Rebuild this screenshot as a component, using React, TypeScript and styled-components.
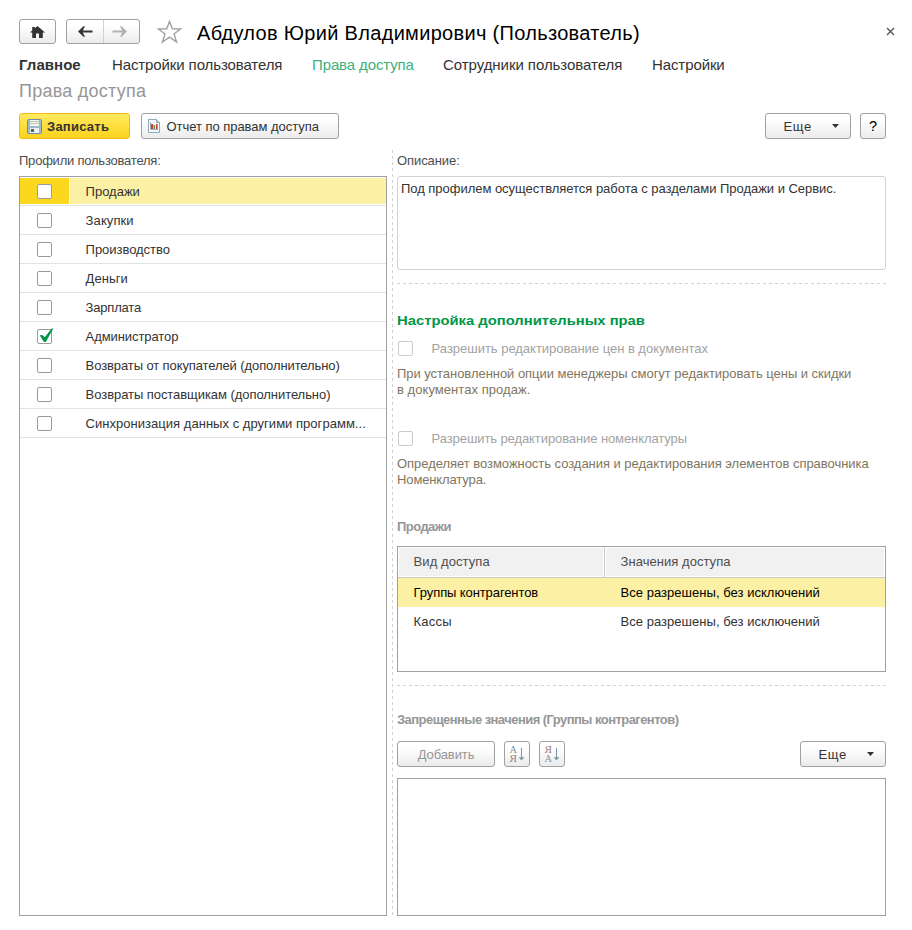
import React from 'react';
import styled, { createGlobalStyle, css } from 'styled-components';

const Global = createGlobalStyle`
  *, *::before, *::after { box-sizing: border-box; }
  body { margin: 0; background: #fff; }
`;

const Page = styled.main`
  display: flex;
  flex-direction: column;
  width: 912px;
  height: 930px;
  padding: 19px 26px 14px 19px;
  background: #fff;
  color: #333;
  font: 13px/16px "Liberation Sans", Arial, sans-serif;
  white-space: nowrap;
`;

const Label = styled.span<{ $track?: number }>`
  letter-spacing: ${(p) => p.$track ?? 0}px;
`;

/* ---------- title line ---------- */

const TitleBar = styled.header`
  display: flex;
  height: 25px;
`;

const raised = css`
  border: 1px solid #a0a0a0;
  border-radius: 3px;
  background: linear-gradient(#fff 0%, #fff 25%, #ebebeb 100%);
`;

const HomeButton = styled.button`
  ${raised}
  display: flex;
  align-items: center;
  justify-content: center;
  width: 37px;
  padding: 0;
`;

const HistoryGroup = styled.div`
  ${raised}
  display: grid;
  grid-template-columns: 36px 1fr;
  width: 74px;
  margin-left: 10px;
`;

const HistoryButton = styled.button`
  display: flex;
  align-items: center;
  justify-content: center;
  padding: 0;
  border: 0;
  background: none;
  & + & { padding-right: 4px; border-left: 1px solid #d2d2d2; }
`;

const StarIcon = styled.svg`
  margin: 0 0 0 17px;
`;

const Title = styled.h1`
  margin: 2px 0 0 14px;
  color: #000;
  font-size: 20px;
  font-weight: 400;
  line-height: 24px;
  letter-spacing: 0.31px;
`;

const CloseButton = styled.button`
  display: flex;
  align-self: flex-start;
  margin: 8px -9px 0 auto;
  padding: 0;
  border: 0;
  background: none;
`;

/* ---------- navigation ---------- */

const Nav = styled.nav`
  display: grid;
  grid-template-columns: 93px 200px 131px 209px auto;
  height: 18px;
  margin-top: 12px;
  font-size: 15px;
  line-height: 18px;
`;

const NavLink = styled.a<{ $current?: boolean; $strong?: boolean; $track: number }>`
  color: ${(p) => (p.$current ? '#41b07c' : '#333')};
  font-weight: ${(p) => (p.$strong ? 700 : 400)};
  letter-spacing: ${(p) => p.$track}px;
`;

const Subtitle = styled.h2`
  margin: 6px 0 0;
  color: #969696;
  font-size: 18px;
  font-weight: 400;
  line-height: 22px;
  letter-spacing: 0.25px;
`;

/* ---------- buttons ---------- */

const Toolbar = styled.div<{ $gap: number; $top: number }>`
  display: flex;
  gap: ${(p) => p.$gap}px;
  height: 26px;
  margin-top: ${(p) => p.$top}px;
`;

const Spacer = styled.div`
  flex: 1;
`;

const Button = styled.button<{ $width: number; $tone?: 'primary' | 'disabled'; $start?: number }>`
  ${raised}
  display: flex;
  align-items: center;
  width: ${(p) => p.$width}px;
  height: 26px;
  padding: 0 0 0 ${(p) => p.$start ?? 0}px;
  justify-content: ${(p) => (p.$start === undefined ? 'center' : 'flex-start')};
  color: #333;
  font: inherit;
  ${(p) =>
    p.$tone === 'primary' &&
    css`
      border-color: #f2bb17;
      background: linear-gradient(#ffea60 0%, #fbd21c 100%);
      font-weight: 700;
    `}
  ${(p) => p.$tone === 'disabled' && css`color: #969696;`}
  & > ${Label} { padding-top: 2px; }
`;

const ButtonIcon = styled.svg<{ $after: number }>`
  flex: none;
  margin-right: ${(p) => p.$after}px;
`;

const Caret = styled.svg`
  margin-left: 20px;
`;

const SortGlyph = styled.svg`
  flex: none;
  overflow: visible;
  font-family: "Liberation Serif", serif;
  font-size: 9.5px;
`;

const HelpMark = styled.span`
  color: #000;
  font-size: 14.5px;
  font-weight: 400;
`;

/* ---------- two panes ---------- */

const Panes = styled.div`
  display: grid;
  grid-template-columns: 368px 10px 489px;
  flex: 1;
  margin-top: 11px;
`;

const Pane = styled.section`
  display: flex;
  flex-direction: column;
  min-width: 0;
`;

const Splitter = styled.div`
  width: 1px;
  margin-left: 5px;
  background: repeating-linear-gradient(#d2d2d2 0 3px, transparent 3px 6px);
`;

const Rule = styled.hr<{ $top: number }>`
  flex: none;
  width: 100%;
  height: 1px;
  margin: ${(p) => p.$top}px 0 0;
  border: 0;
  background: repeating-linear-gradient(90deg, #d2d2d2 0 3px, transparent 3px 6px);
`;

const Caption = styled.div`
  height: 23px;
  margin-top: 3px;
  color: #4d4d4d;
`;

const ProfileList = styled.ul`
  flex: 1;
  margin: 0;
  padding: 0;
  border: 1px solid #a0a0a0;
  list-style: none;
`;

const ProfileRow = styled.li<{ $selected?: boolean }>`
  display: grid;
  grid-template-columns: 49px 1fr;
  column-gap: 1px;
  height: 29px;
  padding: 1px 0;
  border-bottom: 1px solid #e2e2e2;
  --mark: ${(p) => (p.$selected ? '#fbd81f' : 'transparent')};
  --fill: ${(p) => (p.$selected ? '#fcf0a4' : 'transparent')};
`;

const MarkCell = styled.div`
  display: flex;
  align-items: center;
  padding-left: 17px;
  background: var(--mark);
`;

const NameCell = styled.div`
  display: flex;
  align-items: center;
  padding: 2px 0 0 15.6px;
  background: var(--fill);
`;

const Box = styled.span<{ $faint?: boolean }>`
  flex: none;
  width: 15px;
  height: 15px;
  border: 1px solid ${(p) => (p.$faint ? '#cbcbcb' : '#9b9b9b')};
  border-radius: 2px;
  background: #fff;
`;

const Tick = styled.svg`
  display: block;
  margin: -2px 0 0 1px;
  overflow: visible;
`;

const Description = styled.div`
  flex: none;
  height: 94px;
  padding: 4px 3px;
  border: 1px solid #d2d2d2;
  border-radius: 3px;
`;

const GreenHeading = styled.h3`
  align-self: flex-start;
  margin: 29px 0 0;
  color: #009646;
  font-size: 13px;
  line-height: 16px;
  transform: scaleX(1.138);
  transform-origin: left;
`;

const Option = styled.label<{ $top: number }>`
  display: flex;
  align-items: center;
  gap: 18.6px;
  height: 16px;
  margin-top: ${(p) => p.$top}px;
  padding-left: 1px;
  color: #a3a3a3;
  ${Box} { margin-top: -1px; }
`;

const Hint = styled.p`
  display: flex;
  flex-direction: column;
  height: 32px;
  margin: 9px 0 0;
  color: #7f7661;
`;

const GreyHeading = styled.h4<{ $top: number }>`
  margin: ${(p) => p.$top}px 0 0;
  color: #969696;
  font-size: 13px;
  line-height: 16px;
  letter-spacing: -0.55px;
`;

const AccessTable = styled.div`
  flex: none;
  height: 126px;
  margin-top: 11px;
  border: 1px solid #a0a0a0;
`;

const columns = css`
  display: grid;
  grid-template-columns: 206px 1fr;
`;

const TableHead = styled.div`
  ${columns}
  height: 31px;
  border-bottom: 1px solid #c8c8c8;
`;

const HeadCell = styled.div`
  display: flex;
  align-items: center;
  padding-left: 14.6px;
  border: 1px solid #fff;
  background: #f1f1f1;
  color: #4d4d4d;
  & + & { box-shadow: -1px 0 #c8c8c8; margin-left: 1px; }
`;

const TableRow = styled.div<{ $selected?: boolean }>`
  ${columns}
  align-items: center;
  height: 29px;
  background: ${(p) => (p.$selected ? '#fcf0a4' : 'none')};
  color: ${(p) => (p.$selected ? '#000' : '#333')};
`;

const Cell = styled.div`
  padding-left: 15.6px;
  & + & { padding-left: 16.6px; }
`;

const DeniedList = styled.div`
  flex: 1;
  margin-top: 11px;
  border: 1px solid #a0a0a0;
`;

/* ---------- icons ---------- */

const HomeIcon = () => (
  <svg width="15" height="12" viewBox="0 0 15 12" fill="#333">
    <path d="M7.5 0 15 6.6H12.8V12H9V7.6H6V12H2.2V6.6H0L2.2 4.6V1H4.8V2.3Z" />
  </svg>
);

const ArrowIcon = ({ back }: { back?: boolean }) => (
  <svg width="15" height="11" viewBox="0 0 15 11" fill={back ? '#333' : '#b0b0b0'}>
    {back ? (
      <path d="M0 5.5 5.5 0.3H7L4.8 4.4H14.5V6.6H4.8L7 10.7H5.5Z" />
    ) : (
      <path d="M15 5.5 9.5 0.3H8L10.2 4.4H0.5V6.6H10.2L8 10.7H9.5Z" />
    )}
  </svg>
);

const CaretIcon = () => (
  <Caret width="7" height="4" viewBox="0 0 7 4" fill="#333">
    <path d="M0 0H7L3.5 4Z" />
  </Caret>
);

const DiskIcon = () => (
  <ButtonIcon $after={5} width="15" height="15" viewBox="0 0 15 15">
    <rect x=".5" y=".5" width="14" height="14" rx="1" fill="#9db9cf" stroke="#6d8ca5" />
    <rect x="3" y="1" width="9" height="6" fill="#f5f8ee" />
    <path d="M3 2.5H12M3 4.5H12" stroke="#b7c9b5" />
    <rect x="3" y="9" width="9" height="5" fill="#eef2f5" />
    <rect x="4" y="10" width="3" height="3" fill="#4b6678" />
  </ButtonIcon>
);

const ReportIcon = () => (
  <ButtonIcon $after={6.5} width="12" height="14" viewBox="0 0 12 14">
    <path d="M.5 .5H8.5L11.5 3.5V13.5H.5Z" fill="#f4f8fa" stroke="#8fa8b8" />
    <path d="M8.5 .5V3.5H11.5" fill="#c9d8e0" stroke="#8fa8b8" />
    <path d="M2.5 3V10.5H10" fill="none" stroke="#9db0bd" />
    <rect x="3" y="5" width="2" height="5" fill="#d93a31" />
    <rect x="5.5" y="6" width="1.6" height="4" fill="#4d9f48" />
    <rect x="8" y="5" width="1.6" height="5" fill="#d93a31" />
  </ButtonIcon>
);

const SortIcon = ({ reverse }: { reverse?: boolean }) => (
  <SortGlyph width="16" height="18" viewBox="0 0 16 18">
    <text x="0.5" y="7.8" fill={reverse ? '#a07f7d' : '#7d96a6'} textLength="7.5" lengthAdjust="spacingAndGlyphs">{reverse ? 'Я' : 'А'}</text>
    <text x="0.5" y="16.8" fill={reverse ? '#7d96a6' : '#a07f7d'} textLength="7.5" lengthAdjust="spacingAndGlyphs">{reverse ? 'А' : 'Я'}</text>
    <path d="M12.5 3V14" stroke="#7d96a6" strokeWidth="1" />
    <path d="M9.6 12.2H15.4L12.5 15.6Z" fill="#7d96a6" />
  </SortGlyph>
);

const MoreButton = () => (
  <Button $width={86} $start={17.6}>
    <Label $track={0.6}>Еще</Label>
    <CaretIcon />
  </Button>
);

/* ---------- data ---------- */

const profiles = [
  { name: 'Продажи', track: 0, selected: true },
  { name: 'Закупки', track: 0.1 },
  { name: 'Производство', track: -0.04 },
  { name: 'Деньги', track: 0.05 },
  { name: 'Зарплата', track: -0.2 },
  { name: 'Администратор', track: -0.08, checked: true },
  { name: 'Возвраты от покупателей (дополнительно)', track: -0.1 },
  { name: 'Возвраты поставщикам (дополнительно)', track: -0.06 },
  { name: 'Синхронизация данных с другими программ...', track: 0.03 },
];

const accessRows = [
  { kind: 'Группы контрагентов', track: -0.1, selected: true },
  { kind: 'Кассы', track: 0.2 },
];

export default function App() {
  return (
    <Page>
      <Global />
      <TitleBar>
        <HomeButton aria-label="Домой"><HomeIcon /></HomeButton>
        <HistoryGroup>
          <HistoryButton aria-label="Назад"><ArrowIcon back /></HistoryButton>
          <HistoryButton aria-label="Вперед"><ArrowIcon /></HistoryButton>
        </HistoryGroup>
        <StarIcon width="26" height="25" viewBox="0 0 26 25" fill="none" stroke="#a0a0a0" strokeWidth="1.4">
          <path d="M12.5 2.5 15.3 9.8 23.6 10 17 15 19.6 23 12.5 18.2 5.4 23 8 15 1.4 10 9.7 9.8Z" />
        </StarIcon>
        <Title>Абдулов Юрий Владимирович (Пользователь)</Title>
        <CloseButton aria-label="Закрыть">
          <svg width="9" height="9" viewBox="0 0 9 9" stroke="#555" strokeWidth="1.4">
            <path d="M1 1 8 8M8 1 1 8" />
          </svg>
        </CloseButton>
      </TitleBar>

      <Nav>
        <NavLink $strong $track={0.05}>Главное</NavLink>
        <NavLink $track={-0.11}>Настройки пользователя</NavLink>
        <NavLink $current $track={-0.12}>Права доступа</NavLink>
        <NavLink $track={-0.05}>Сотрудники пользователя</NavLink>
        <NavLink $track={-0.1}>Настройки</NavLink>
      </Nav>
      <Subtitle>Права доступа</Subtitle>

      <Toolbar $gap={11} $top={11}>
        <Button $width={111} $tone="primary" $start={7}>
          <DiskIcon />
          <Label $track={0.25}>Записать</Label>
        </Button>
        <Button $width={198} $start={6}>
          <ReportIcon />
          <Label $track={-0.04}>Отчет по правам доступа</Label>
        </Button>
        <Spacer />
        <Toolbar $gap={9} $top={0}>
          <MoreButton />
          <Button $width={26}><HelpMark>?</HelpMark></Button>
        </Toolbar>
      </Toolbar>

      <Panes>
        <Pane>
          <Caption><Label $track={-0.22}>Профили пользователя:</Label></Caption>
          <ProfileList>
            {profiles.map((p) => (
              <ProfileRow key={p.name} $selected={p.selected}>
                <MarkCell>
                  <Box>
                    {p.checked && (
                      <Tick width="15" height="15" viewBox="0 0 15 15">
                        <path d="M0.6 7.2 3.2 7 5.8 9.3 12.6 0.4H14.3L6.8 14H5Z" fill="#009646" />
                      </Tick>
                    )}
                  </Box>
                </MarkCell>
                <NameCell><Label $track={p.track}>{p.name}</Label></NameCell>
              </ProfileRow>
            ))}
          </ProfileList>
        </Pane>
        <Splitter />
        <Pane>
          <Caption><Label $track={-0.08}>Описание:</Label></Caption>
          <Description>
            <Label $track={-0.03}>Под профилем осуществляется работа с разделами Продажи и Сервис.</Label>
          </Description>
          <Rule $top={13} />
          <GreenHeading>Настройка дополнительных прав</GreenHeading>

          <Option $top={12}>
            <Box $faint />
            <Label $track={-0.02}>Разрешить редактирование цен в документах</Label>
          </Option>
          <Hint>
            <Label $track={-0.04}>При установленной опции менеджеры смогут редактировать цены и скидки</Label>
            <Label $track={0.05}>в документах продаж.</Label>
          </Hint>

          <Option $top={33}>
            <Box $faint />
            <Label $track={-0.09}>Разрешить редактирование номенклатуры</Label>
          </Option>
          <Hint>
            <Label $track={-0.04}>Определяет возможность создания и редактирования элементов справочника</Label>
            <Label $track={-0.12}>Номенклатура.</Label>
          </Hint>

          <GreyHeading $top={31}>Продажи</GreyHeading>
          <AccessTable>
            <TableHead>
              <HeadCell><Label $track={0.08}>Вид доступа</Label></HeadCell>
              <HeadCell><Label $track={0.04}>Значения доступа</Label></HeadCell>
            </TableHead>
            {accessRows.map((r) => (
              <TableRow key={r.kind} $selected={r.selected}>
                <Cell><Label $track={r.track}>{r.kind}</Label></Cell>
                <Cell><Label $track={0.03}>Все разрешены, без исключений</Label></Cell>
              </TableRow>
            ))}
          </AccessTable>
          <Rule $top={13} />

          <GreyHeading $top={26}>Запрещенные значения (Группы контрагентов)</GreyHeading>
          <Toolbar $gap={9} $top={13}>
            <Button $width={98} $tone="disabled"><Label $track={-0.1}>Добавить</Label></Button>
            <Button $width={26}><SortIcon /></Button>
            <Button $width={26}><SortIcon reverse /></Button>
            <Spacer />
            <MoreButton />
          </Toolbar>
          <DeniedList />
        </Pane>
      </Panes>
    </Page>
  );
}
